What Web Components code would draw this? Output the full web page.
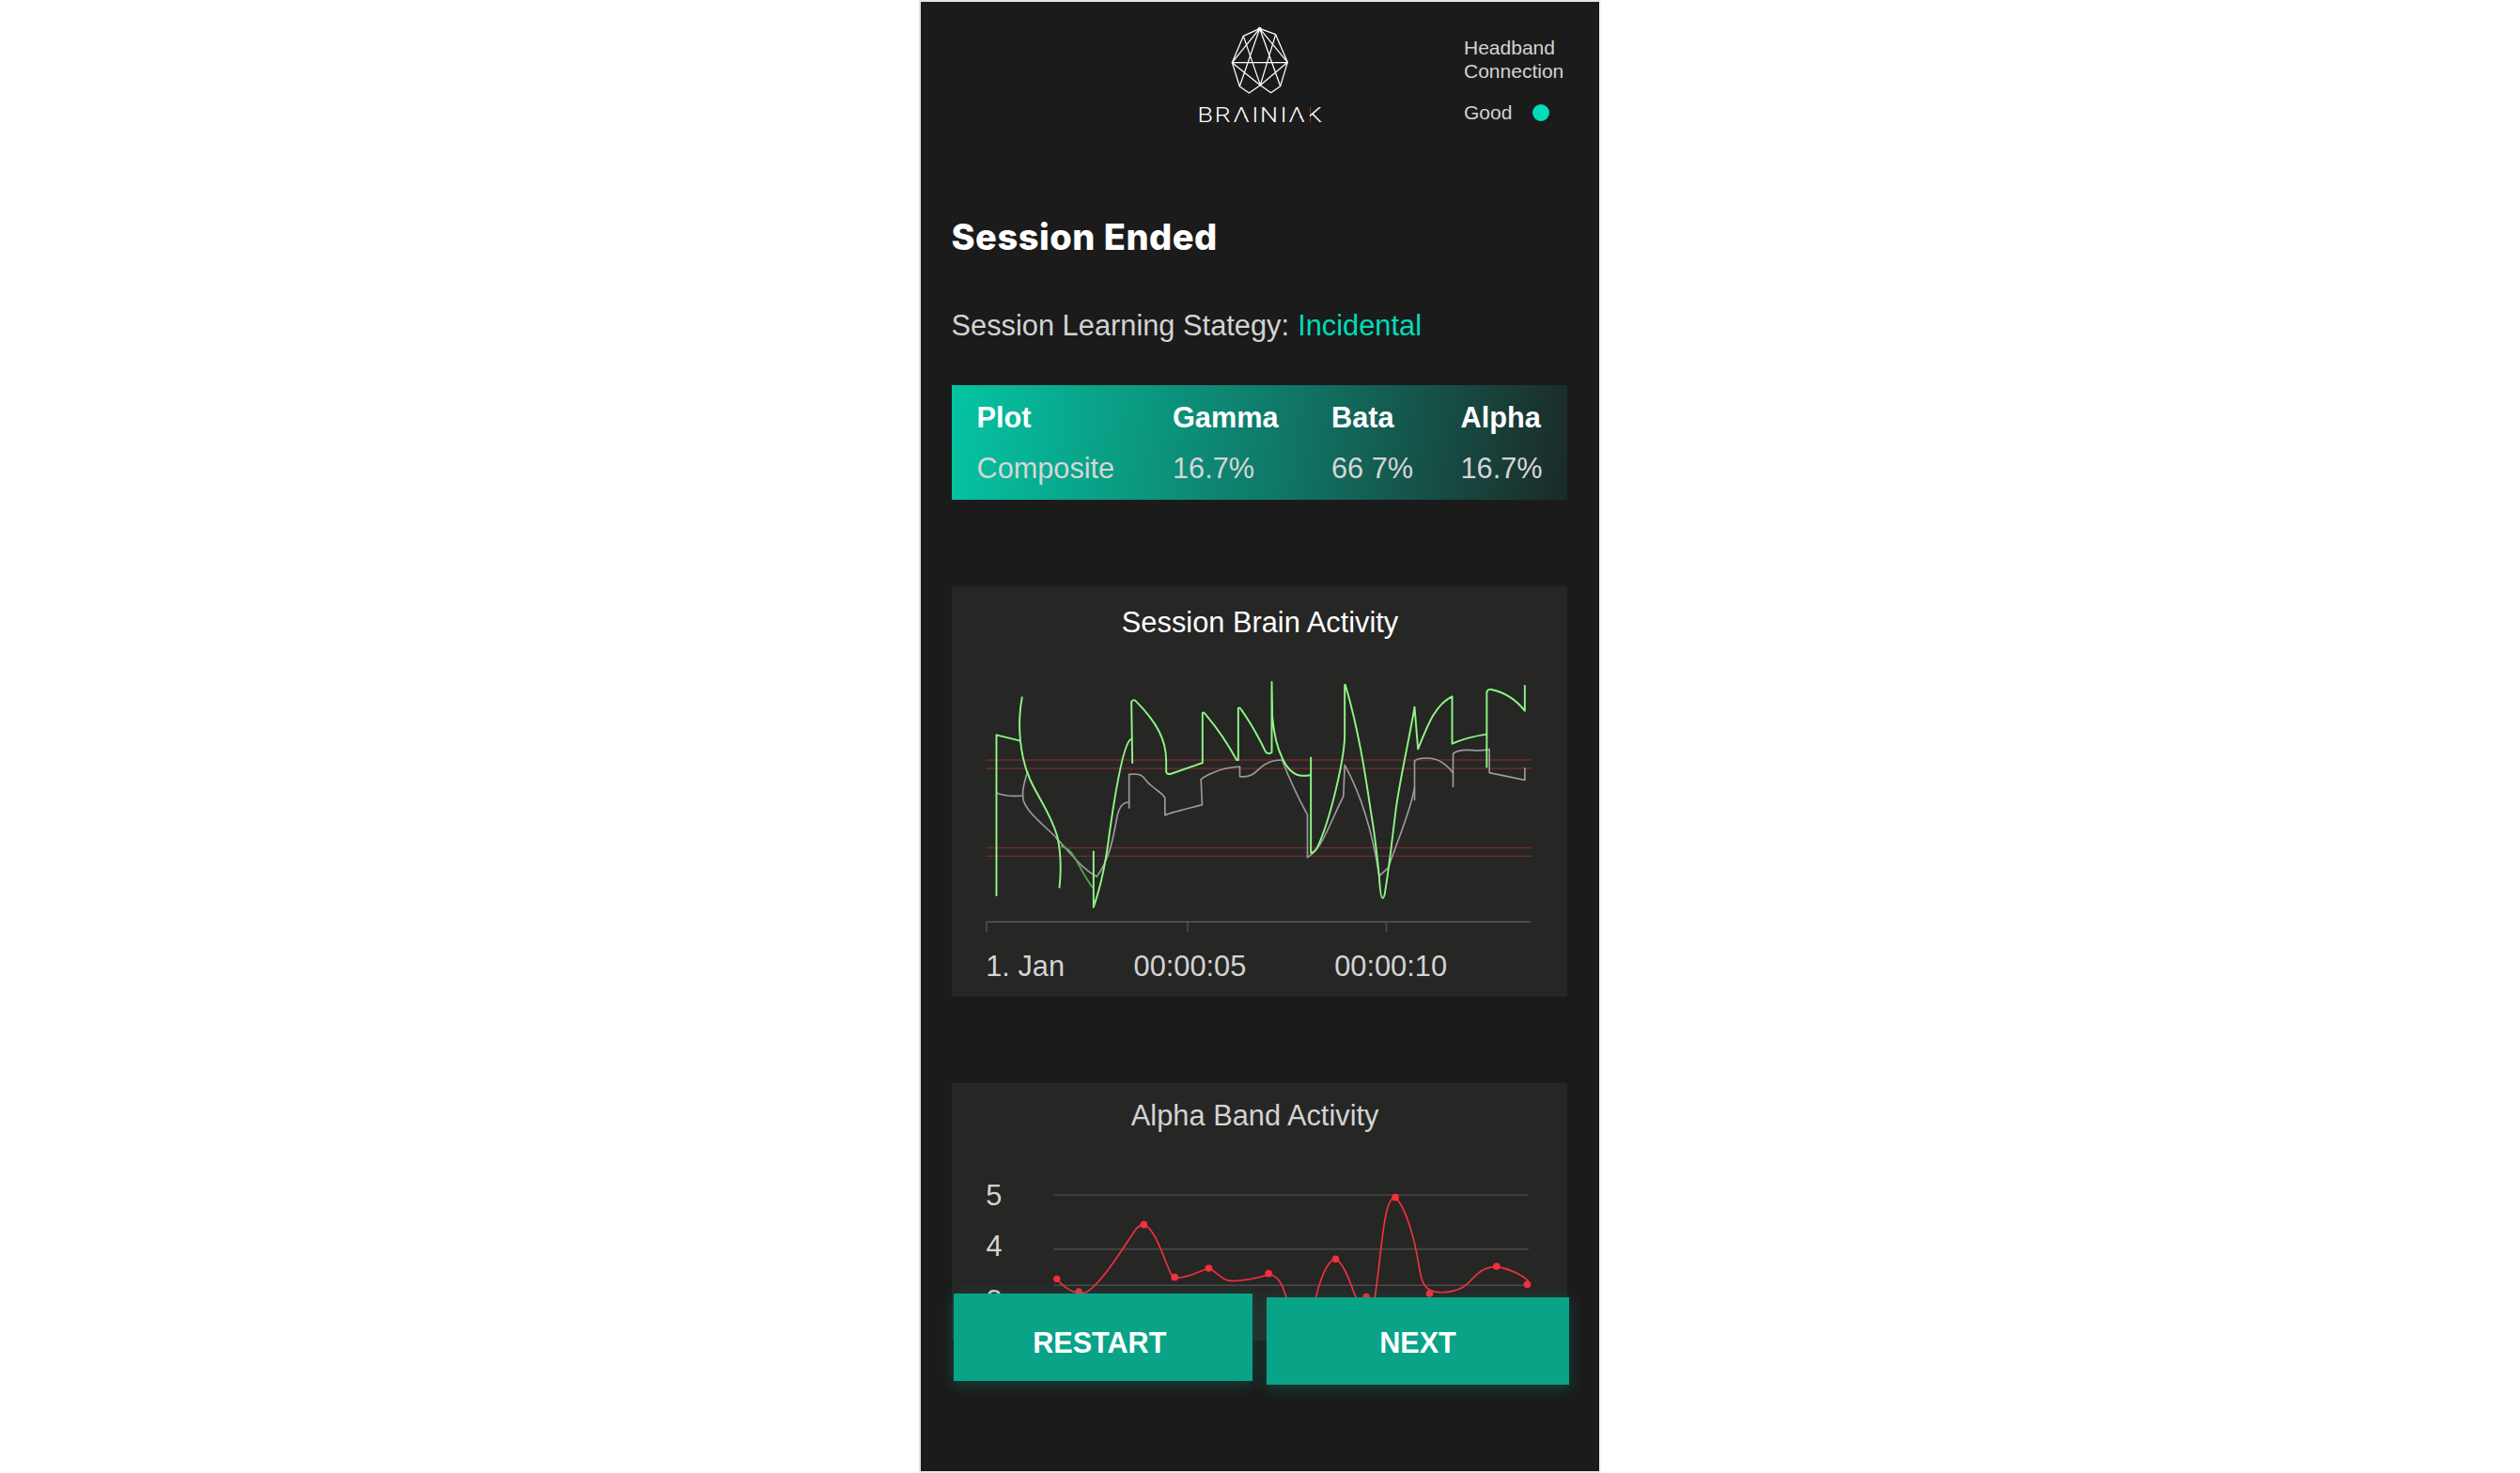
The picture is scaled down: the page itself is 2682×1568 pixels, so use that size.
<!DOCTYPE html>
<html lang="en">
<head>
<meta charset="utf-8">
<title>Brainiak</title>
<style>
html,body{margin:0;height:100%;background:#fff}
body{display:flex;justify-content:center;font-family:"Liberation Sans",Arial,sans-serif;overflow:hidden}
</style>
</head>
<body>
<session-screen></session-screen>
<script>
const define = (name, html) => customElements.define(name, class extends HTMLElement {
  constructor() {
    super();
    const t = document.createElement('template');
    t.innerHTML = html;
    this.attachShadow({mode: 'open'}).append(t.content.cloneNode(true));
  }
});

define('brand-logo', `
<style>:host{display:block;width:200px;height:140px}svg{display:block}
text{font-family:Roboto,"Liberation Sans",sans-serif;font-weight:300;font-size:67px;fill:#fff}</style>
<svg width="200" height="140" viewBox="0 0 600 420">
  <g fill="none" stroke="#fff" stroke-width="3.8" stroke-linejoin="round">
    <path d="M302 61L250 85L214 170L238 246L268 267L304 242L338 266L368 245L391 169L353 80Z"/>
    <path d="M302 61L214 170L304 242L391 169L302 61M302 61L238 246M302 61L368 245M250 85L304 242L353 80M214 170H391"/>
  </g>
  <circle cx="302" cy="62" r="6" fill="#fff"/>
  <text transform="scale(1.2 1)" y="360" x="86.300 131.8 181.7 230.5 252.4 306.300 329.200 375.300">BRAINIAK</text>
  <g fill="#1b1b1b">
    <path d="M233.500 340H251.500L255.300 350H229.700ZM410.500 340H428.500L432.300 350H406.700Z"/>
    <path d="M453 306H462V366H453Z"/>
  </g>
</svg>`);

define('connection-status', `
<style>:host{display:block;font-size:21px;line-height:25px;color:#d3d3d3}
.row{display:flex;align-items:center;margin-top:19px}
i{width:18px;height:18px;border-radius:50%;background:#00dcb8;margin-left:22px;margin-top:1px}</style>
<slot></slot><div class="row"><span>Good</span><i></i></div>`);

define('app-header', `
<style>:host{display:grid;grid-template-columns:260px 200px 1fr;height:140px;padding-top:8px}
connection-status{padding:28px 0 0 118px}</style>
<span></span><brand-logo></brand-logo>
<connection-status>Headband<br>Connection</connection-status>`);

define('band-table', `
<style>:host{display:grid;box-sizing:border-box;grid-template-columns:208.500px 169px 137.5px 1fr;grid-template-rows:34px 34px;row-gap:20px;
width:655.5px;height:122px;padding:18px 0 0 27px;font-size:30.7px;line-height:34px;color:#d6d6d6;white-space:nowrap;
background:linear-gradient(98deg,#04c5a3 0%,#107767 54%,#1b2a27 100%)}
b{color:#fff}</style>
<b>Plot</b><b>Gamma</b><b>Bata</b><b>Alpha</b>
<span>Composite</span><span>16.7%</span><span>66 7%</span><span>16.7%</span>`);

define('chart-card', `
<style>:host{display:block;width:655.500px;background:#262625;overflow:hidden}
::slotted(*){display:block}</style><slot></slot>`);

define('brain-chart', `
<style>:host{display:block}svg{display:block}
text{font-size:92.4px;fill:#d3d3d3}.t{fill:#fff}</style>
<svg width="656" height="437" viewBox="37.5 42 1968 1311">
  <text class="t" x="580" y="188">Session Brain Activity</text>
  <g stroke="#712b2d" stroke-width="4.8"><path d="M147 597H1889M147 624H1889"/><path stroke-width="3.8" d="M147 877.5H1889M147 904H1889"/></g>
  <g stroke="#5f5f5e" stroke-width="3.4" fill="none"><path d="M148.5 1146V1114H1887M790.5 1110V1146"/><path stroke="#484847" stroke-width="5.5" d="M1425 1110V1146"/></g>
  <g stroke="#9b9b9b" stroke-width="5" fill="none" stroke-linejoin="round">
    <path d="M180 702Q215 716 263 711M280 632C262 690 262 705 266 726C280 770 340 810 375 850C430 910 450 940 500 970C545 910 555 830 567 770Q578 730 603 732"/>
    <path d="M603.500 752V643C655 637 650 660 670 675C700 702 718 708 718 720V773Q735 765 837 740L833 660Q840 650 870 638Q910 620 957 618V650C1010 655 1010 620 1049 605Q1065 598 1092 597C1120 670 1150 730 1173 772V908C1220 880 1235 820 1288 712L1292 613C1340 700 1380 820 1402 968L1432 940C1450 880 1500 770 1515 685"/>
    <path d="M1515 727V600C1530 588 1580 585 1610 610Q1630 625 1638 640M1638 684V577Q1655 562 1700 566Q1730 568 1754 563V638L1867 661V622"/>
  </g>
  <path d="M385 872C420 880 430 910 450 945C465 972 475 988 487 1005" fill="none" stroke="#55a853" stroke-width="5"/>
  <g stroke="#8cf882" stroke-width="5.8" fill="none" stroke-linejoin="round">
    <path d="M180 1032V517L254 535M262 395C250 460 250 520 265 590C285 690 345 740 374 840C388 900 387 950 381 1006"/>
    <path d="M490 887V1067C510 1010 530 920 541 830C565 660 590 540 610 530"/>
    <path d="M614 608L611 412Q618 400 626 410C690 475 722 530 722 600V635Q724 643 735 642L838 606V447Q842 443 848 452C885 495 910 530 947 597H952V432Q957 427 962 437C1000 490 1020 530 1040 572Q1048 580 1059 573V348L1061 460C1070 560 1105 655 1165 647L1184 646"/>
    <path d="M1184 587V894Q1195 893 1205 875C1245 790 1290 600 1292 520V357L1294 357C1345 530 1365 700 1380 790C1390 850 1398 930 1402 968Q1406 1038 1413 1038Q1419 1038 1422 1010C1435 930 1442 860 1456 750C1470 650 1498 530 1515 428L1526 562C1555 490 1580 420 1635 394V545Q1680 525 1744 515M1745.500 622V380Q1748 370 1760 372C1800 380 1835 400 1867 440V358"/>
  </g>
  <text x="146" y="1286">1. Jan</text><text x="618" y="1286">00:00:05</text><text x="1259" y="1286">00:00:10</text>
</svg>`);

define('alpha-chart', `
<style>:host{display:block}svg{display:block}
text{font-size:92.4px;fill:#d3d3d3}</style>
<svg width="656" height="274" viewBox="37.5 40 1968 822">
  <text x="610" y="176">Alpha Band Activity</text>
  <text x="146" y="429">5</text><text x="147" y="591">4</text><text x="147" y="765">3</text>
  <g stroke="#555554" stroke-width="3.600"><path d="M363 397H1879M363 685.500H1879"/><path stroke="#484847" stroke-width="5.500" d="M363 570H1879"/></g>
  <g fill="none" stroke="#f4303c" stroke-width="5">
    <path d="M373 665C395 695 430 712 455 711C500 710 600 540 625 507Q640 490 651 492C690 505 720 620 738 650Q745 663 765 661C800 657 830 640 858 631C890 645 895 668 925 671C960 674 1020 660 1049 652C1080 650 1095 690 1106 725C1120 790 1180 790 1200 725C1220 640 1245 602 1263 602C1290 615 1310 680 1328 725C1340 770 1375 780 1388 725C1410 590 1415 400 1454 405C1490 440 1517 550 1525 600C1534 650 1535 690 1570 703C1600 715 1650 705 1675 688C1710 660 1720 628 1777 626C1820 632 1860 655 1877 670L1875 683"/>
  </g>
  <g fill="#f4303c"><circle cx="373" cy="665" r="11"/><circle cx="443" cy="706" r="11"/><circle cx="651" cy="492" r="11.500"/><circle cx="749" cy="660" r="11.500"/><circle cx="858" cy="631" r="11.500"/><circle cx="1049" cy="648" r="11.500"/><circle cx="1263" cy="602" r="11.500"/><circle cx="1361" cy="723" r="11.500"/><circle cx="1454" cy="405" r="11.500"/><circle cx="1563" cy="712" r="11.500"/><circle cx="1777" cy="625" r="11.500"/><circle cx="1875" cy="683" r="11.500"/></g>
</svg>`);

define('action-button', `
<style>:host{display:flex;justify-content:center;color:#fff;background:#09a388;font-weight:700;font-size:30.600px;line-height:34px;
box-sizing:border-box;box-shadow:0 3px 14px 1px rgba(9,163,136,.28)}</style><slot></slot>`);

define('action-bar', `
<style>:host{display:flex;align-items:flex-start;gap:15px}
.a{width:318.500px;height:93px;padding-top:34.500px;padding-right:7px}.b{width:322px;height:93px;padding-top:30.500px;margin-top:4px}</style>
<action-button class="a">RESTART</action-button><action-button class="b">NEXT</action-button>`);

define('session-screen', `
<style>:host{display:block;position:relative;box-sizing:border-box;width:726px;height:1568px;border:2px solid #e4e4e4;border-right-color:#f4f4f4;border-bottom-color:#ebe6e6;background:#1b1b1b}
main{display:flex;flex-direction:column;align-items:flex-start;padding-left:32.500px}
h1{margin:77px 0 0;font:800 38px/50px Inter,sans-serif;color:#fff;white-space:nowrap;letter-spacing:.5px}
p{margin:53px 0 0;font-size:30.800px;line-height:34px;color:#d3d3d3;white-space:nowrap}
p span{color:#00dcb8;margin-left:.6px}
band-table{margin-top:46px}
.c1{margin-top:92px}.c2{margin-top:92px}
action-bar{position:absolute;left:34.500px;top:1375px}</style>
<app-header></app-header>
<main>
<h1>Session Ended</h1>
<p>Session Learning Stategy: <span>Incidental</span></p>
<band-table></band-table>
<chart-card class="c1"><brain-chart></brain-chart></chart-card>
<chart-card class="c2"><alpha-chart></alpha-chart></chart-card>
</main>
<action-bar></action-bar>`);
</script>
</body>
</html>
